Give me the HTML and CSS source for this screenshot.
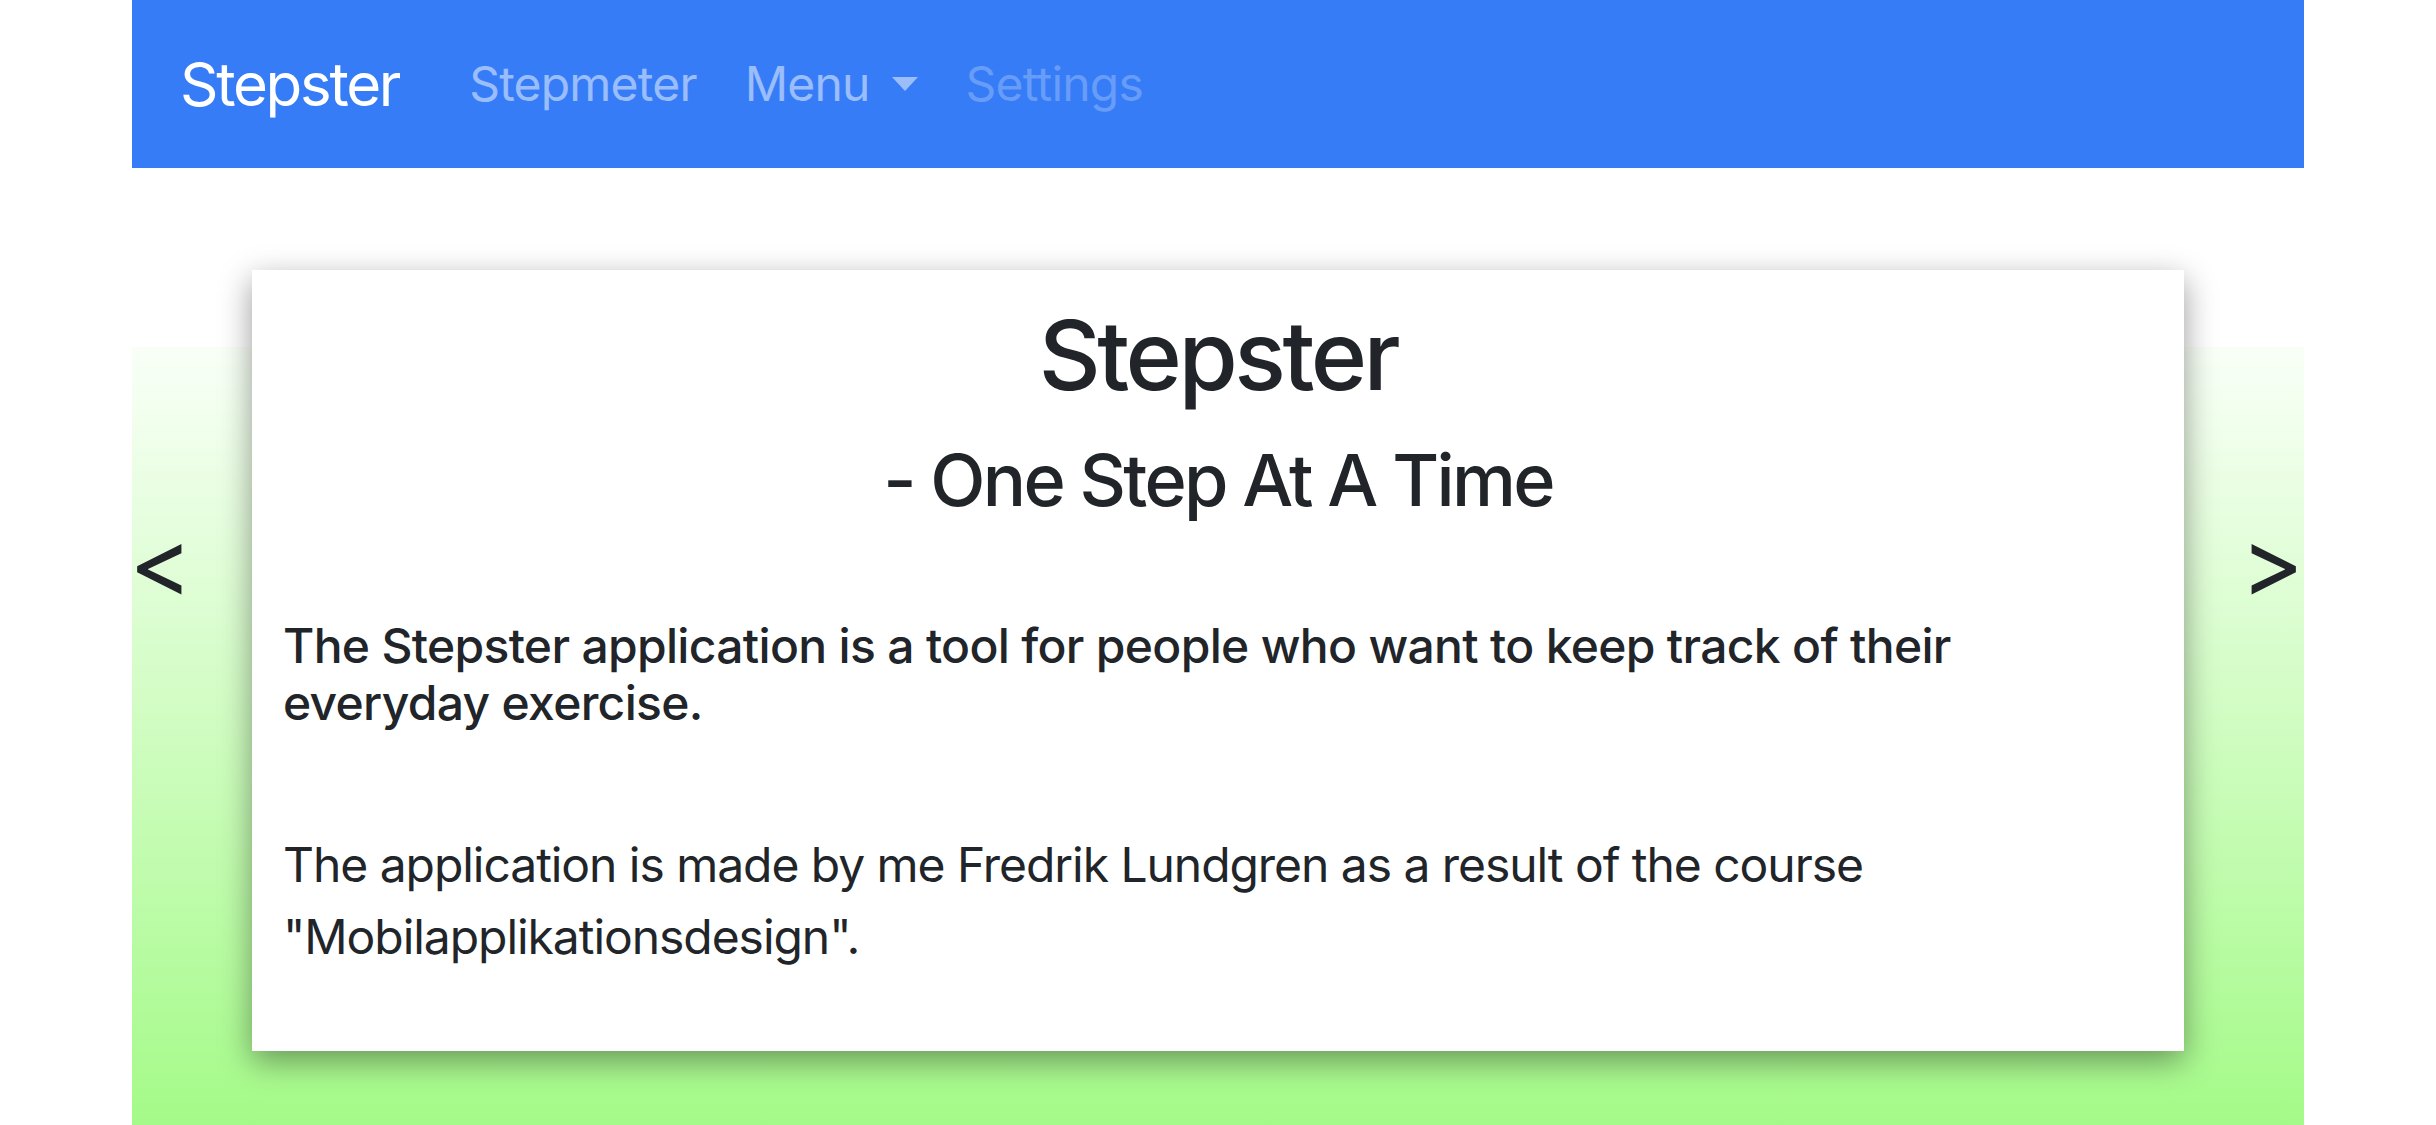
FILE: index.html
```html
<!DOCTYPE html>
<html lang="en">
<head>
<meta charset="utf-8">
<title>Stepster</title>
<link rel="stylesheet" href="styles.css">
</head>
<body>
<div class="page">
  <nav class="navbar">
    <a class="brand" href="#">Stepster</a>
    <ul class="nav">
      <li><a class="nav-link" href="#">Stepmeter</a></li>
      <li><a class="nav-link dropdown" href="#">Menu<span class="caret"></span></a></li>
      <li><a class="nav-link disabled" href="#">Settings</a></li>
    </ul>
  </nav>
  <main class="stage">
    <div class="arrow arrow-left">&lt;</div>
    <section class="card">
      <h2 class="title">Stepster</h2>
      <h4 class="subtitle">- One Step At A Time</h4>
      <h6 class="lead">The Stepster application is a tool for people who want to keep track of their everyday exercise.</h6>
      <p class="text">The application is made by me Fredrik Lundgren as a result of the course "Mobilapplikationsdesign".</p>
    </section>
    <div class="arrow arrow-right">&gt;</div>
  </main>
</div>
</body>
</html>
```
FILE: styles.css
```css
* { box-sizing: border-box; }
html, body { margin: 0; padding: 0; background: #fff; }
body {
  font-family: Inter, "Noto Sans", "Liberation Sans", sans-serif;
  color: #212529;
  overflow: hidden;
}
.page {
  width: 2172px;
  margin: 0 auto;
}
.navbar {
  display: flex;
  align-items: center;
  background: #367cf7;
  padding: 24px 48px;
  height: 168px;
}
.brand {
  font-size: 60px;
  line-height: 90px;
  padding: 15px 0;
  margin-right: 46px;
  letter-spacing: -2.3px;
  color: #fff;
  text-decoration: none;
}
.nav {
  display: flex;
  list-style: none;
  margin: 0;
  padding: 0;
}
.nav-link {
  display: flex;
  align-items: center;
  font-size: 48px;
  line-height: 72px;
  padding: 0 24px;
  letter-spacing: -0.8px;
  color: rgba(255, 255, 255, 0.5);
  text-decoration: none;
}
.nav-link.disabled { color: rgba(255, 255, 255, 0.25); }
.caret {
  display: inline-block;
  margin-left: 22px;
  width: 0;
  height: 0;
  border-top: 14px solid rgba(255, 255, 255, 0.5);
  border-left: 13px solid transparent;
  border-right: 13px solid transparent;
}
.stage {
  display: flex;
  align-items: flex-start;
  padding-top: 102px;
  min-height: calc(100vh - 168px);
  background-image: linear-gradient(to bottom, #f9fff7 0%, #a4fa88 100%);
  background-repeat: no-repeat;
  background-position: 0 179px;
  background-size: 100% calc(100% - 179px);
}
.arrow {
  width: 120px;
  font-size: 96px;
  line-height: 115px;
  margin-top: 235px;
  color: #212529;
}
.arrow-left { text-align: left; margin-left: -3px; margin-right: 3px; }
.arrow-right { text-align: right; }
.card {
  width: 1932px;
  background: #fff;
  padding: 28px 31px 30px;
  box-shadow: 0 10px 30px rgba(0, 0, 0, 0.4);
}
.title {
  margin: 0 0 24px;
  font-size: 96px;
  line-height: 1.2;
  font-weight: 500;
  letter-spacing: -3.5px;
  text-align: center;
}
.subtitle {
  margin: 0 0 93px;
  font-size: 72px;
  line-height: 1.2;
  font-weight: 500;
  letter-spacing: -2.7px;
  text-align: center;
}
.lead {
  margin: 0 0 97px;
  max-width: 1780px;
  font-size: 48px;
  line-height: 1.2;
  font-weight: 500;
  letter-spacing: -0.68px;
}
.text {
  margin: 0 0 48px;
  max-width: 1780px;
  font-size: 48px;
  line-height: 1.5;
  font-weight: 400;
  letter-spacing: -1.05px;
}
```
